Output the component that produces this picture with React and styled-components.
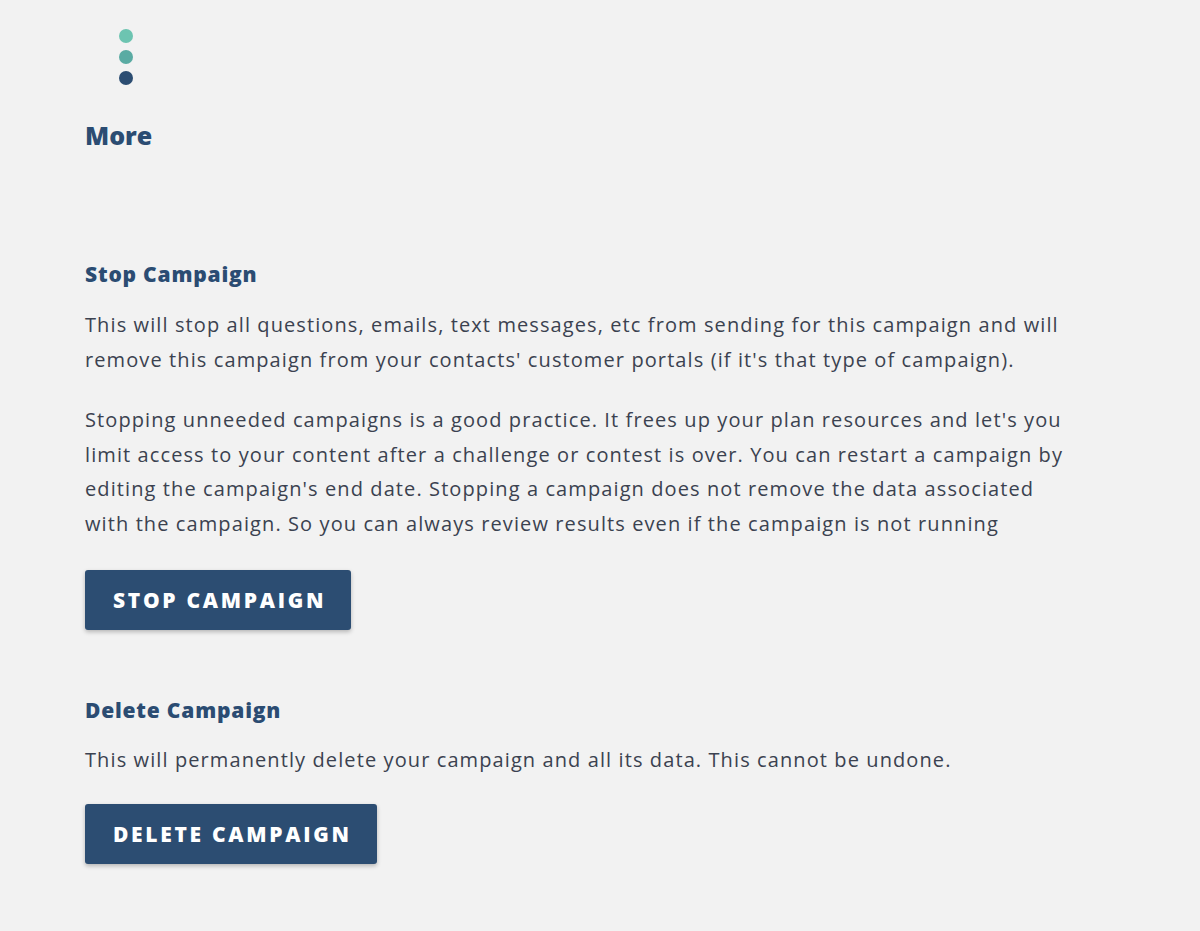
import styled, { createGlobalStyle } from "styled-components";

const GlobalStyle = createGlobalStyle`
  html, body {
    margin: 0;
    padding: 0;
    background: #f2f2f2;
  }
  body {
    font-family: "Open Sans", "Noto Sans", sans-serif;
    color: #3b4250;
  }
`;

const Page = styled.div`
  min-height: 931px;
  padding: 29px 0 0 85px;
  box-sizing: border-box;
`;

const Dots = styled.div`
  display: flex;
  flex-direction: column;
  gap: 7px;
  margin-left: 34px;
`;

const Dot = styled.span`
  display: block;
  width: 14px;
  height: 14px;
  border-radius: 50%;
  background: ${(p) => p.color};
`;

const Title = styled.h1`
  margin: 34px 0 0;
  font-size: 25px;
  font-weight: 800;
  color: #2b4c72;
  line-height: 32px;
`;

const Section = styled.section`
  margin-top: ${(p) => p.top}px;
`;

const Heading = styled.h2`
  margin: 0;
  font-size: 21px;
  font-weight: 800;
  letter-spacing: 0.8px;
  color: #2b4c72;
  line-height: 26px;
`;

const Text = styled.p`
  margin: ${(p) => p.top || 0}px 0 0;
  font-size: 20px;
  letter-spacing: 1.1px;
  line-height: 34.5px;
  white-space: nowrap;
`;

const Button = styled.button`
  display: block;
  margin-top: ${(p) => p.top}px;
  height: 60px;
  padding: 0 25px 0 28px;
  border: none;
  border-radius: 3px;
  background: #2c4d72;
  color: #fff;
  font-family: inherit;
  font-size: 21px;
  font-weight: 800;
  letter-spacing: 2.7px;
  text-transform: uppercase;
  box-shadow: 0 2px 4px rgba(0, 0, 0, 0.25);
  cursor: pointer;
`;

export default function App() {
  return (
    <>
      <GlobalStyle />
      <Page>
        <Dots>
          <Dot color="#6dc4b1" />
          <Dot color="#5aaba3" />
          <Dot color="#2c4d72" />
        </Dots>
        <Title>More</Title>
        <Section top={110}>
          <Heading>Stop Campaign</Heading>
          <Text top={21}>
            This will stop all questions, emails, text messages, etc from sending for this campaign and will
            <br />
            remove this campaign from your contacts' customer portals (if it's that type of campaign).
          </Text>
          <Text top={26}>
            Stopping unneeded campaigns is a good practice. It frees up your plan resources and let's you
            <br />
            limit access to your content after a challenge or contest is over. You can restart a campaign by
            <br />
            editing the campaign's end date. Stopping a campaign does not remove the data associated
            <br />
            with the campaign. So you can always review results even if the campaign is not running
          </Text>
          <Button top={29}>Stop Campaign</Button>
        </Section>
        <Section top={67}>
          <Heading>Delete Campaign</Heading>
          <Text top={20}>
            This will permanently delete your campaign and all its data. This cannot be undone.
          </Text>
          <Button top={26}>Delete Campaign</Button>
        </Section>
      </Page>
    </>
  );
}
